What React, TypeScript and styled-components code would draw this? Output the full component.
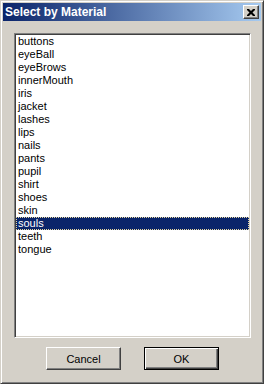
import React, { FC } from "react";
import styled, { createGlobalStyle } from "styled-components";

const GlobalStyle = createGlobalStyle`
  html, body {
    margin: 0;
    padding: 0;
    background: #d4d0c8;
  }
  * {
    box-sizing: border-box;
  }
`;

const materials = [
  "buttons",
  "eyeBall",
  "eyeBrows",
  "innerMouth",
  "iris",
  "jacket",
  "lashes",
  "lips",
  "nails",
  "pants",
  "pupil",
  "shirt",
  "shoes",
  "skin",
  "souls",
  "teeth",
  "tongue",
];

const Window = styled.div`
  width: 264px;
  height: 384px;
  display: flex;
  flex-direction: column;
  background: #d4d0c8;
  border: 1px solid;
  border-color: #d4d0c8 #404040 #404040 #d4d0c8;
  box-shadow: inset 1px 1px #ffffff, inset -1px -1px #808080;
  padding: 2px;
  font-family: "Liberation Sans", Arial, sans-serif;
  font-size: 11px;
  color: #000;
`;

const TitleBar = styled.div`
  height: 18px;
  display: flex;
  align-items: center;
  justify-content: space-between;
  padding: 0 2px 0 2px;
  background: linear-gradient(to right, #0a246a, #a6caf0);
`;

const Title = styled.span`
  color: #fff;
  font-weight: bold;
  font-size: 12px;
  line-height: 14px;
`;

const CloseButton = styled.button`
  width: 16px;
  height: 14px;
  padding: 0;
  margin: 0;
  display: flex;
  align-items: center;
  justify-content: center;
  background: #d4d0c8;
  border: 1px solid;
  border-color: #ffffff #404040 #404040 #ffffff;
  box-shadow: inset -1px -1px #808080;
`;

const Body = styled.div`
  flex: 1;
  display: flex;
  flex-direction: column;
  padding: 12px 10px 0 11px;
`;

const ListBox = styled.div`
  height: 305px;
  background: #fff;
  border: 1px solid;
  border-color: #808080 #ffffff #ffffff #808080;
  box-shadow: inset 1px 1px #404040, inset -1px -1px #d4d0c8;
  padding: 1px;
  display: flex;
  flex-direction: column;
`;

const Row = styled.div<{ $selected?: boolean }>`
  height: 13px;
  line-height: 11px;
  padding-left: 1px;
  white-space: nowrap;
  background: ${(p) => (p.$selected ? "#0a246a" : "transparent")};
  color: ${(p) => (p.$selected ? "#fff" : "#000")};
  border: 1px ${(p) => (p.$selected ? "dotted #e6d7a0" : "solid transparent")};
`;

const ButtonRow = styled.div`
  display: flex;
  justify-content: center;
  gap: 23px;
  margin-top: 9px;
`;

const Button = styled.button<{ $default?: boolean }>`
  width: 75px;
  height: 23px;
  padding: 0;
  margin: 0;
  background: #d4d0c8;
  font-family: "Liberation Sans", Arial, sans-serif;
  font-size: 11px;
  color: #000;
  border: 1px solid;
  border-color: ${(p) =>
    p.$default ? "#000" : "#ffffff #404040 #404040 #ffffff"};
  box-shadow: ${(p) =>
    p.$default
      ? "inset 1px 1px #ffffff, inset -1px -1px #404040, inset -2px -2px #808080"
      : "inset -1px -1px #808080"};
`;

const App: FC = () => (
  <>
    <GlobalStyle />
    <Window>
      <TitleBar>
        <Title>Select by Material</Title>
        <CloseButton type="button">
          <svg width="8" height="7" viewBox="0 0 8 7">
            <path
              d="M0 0h2l2 2 2-2h2v1L5.5 3.5 8 6v1H6L4 5 2 7H0V6l2.5-2.5L0 1z"
              fill="#000"
            />
          </svg>
        </CloseButton>
      </TitleBar>
      <Body>
        <ListBox>
          {materials.map((m) => (
            <Row key={m} $selected={m === "souls"}>
              {m}
            </Row>
          ))}
        </ListBox>
        <ButtonRow>
          <Button type="button">Cancel</Button>
          <Button type="button" $default>
            OK
          </Button>
        </ButtonRow>
      </Body>
    </Window>
  </>
);

export default App;
